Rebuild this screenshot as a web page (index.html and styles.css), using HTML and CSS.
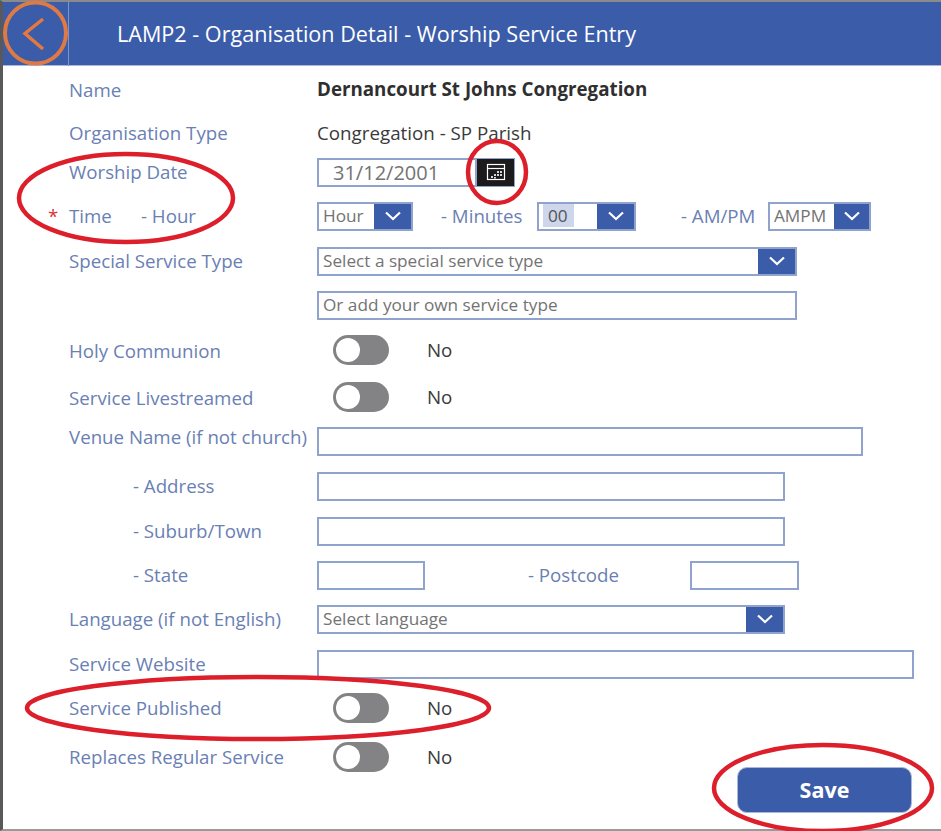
FILE: index.html
```html
<!DOCTYPE html>
<html>
<head>
	<title>Worship Service Entry</title>
	<link rel="stylesheet" href="styles.css">
</head>
<body>
<div class="app">
	<div class="top-bar">
		<div class="back">
			<svg width="65" height="64" viewBox="0 0 65 64"><circle cx="32.5" cy="31" r="30.5" /><polyline points="40,17 22,31.5 40,47" /></svg>
		</div>
		<h1>LAMP2 - Organisation Detail - Worship Service Entry</h1>
	</div>
	<div class="form">
		<div class="lbl">Name</div>
		<div class="field name-val">Dernancourt St Johns Congregation</div>

		<div class="lbl">Organisation Type</div>
		<div class="field type-val">Congregation - SP Parish</div>

		<div class="lbl">Worship Date</div>
		<div class="field">
			<div class="box date-box">31/12/2001</div>
			<div class="cal-btn">
				<svg width="20" height="18" viewBox="0 0 20 18">
					<rect x="1.5" y="1.5" width="17" height="15" class="cal-line" />
					<line x1="1.5" y1="5.5" x2="18.5" y2="5.5" class="cal-line" />
					<rect x="11" y="8" width="2" height="2" class="cal-dot" />
					<rect x="14" y="8" width="2" height="2" class="cal-dot" />
					<rect x="8" y="11" width="2" height="2" class="cal-dot" />
					<rect x="11" y="11" width="2" height="2" class="cal-dot" />
					<rect x="14" y="11" width="2" height="2" class="cal-dot" />
					<rect x="5" y="13" width="2" height="2" class="cal-dot" />
					<rect x="8" y="14" width="2" height="1.5" class="cal-dot" />
				</svg>
			</div>
		</div>

		<div class="lbl"><span class="star">*</span><span class="time-word">Time</span>- Hour</div>
		<div class="field">
			<div class="box select w-hour">
				<span class="sel-text">Hour</span>
				<span class="chev"><svg width="18" height="10" viewBox="0 0 18 10"><polyline points="2,1.5 9,8 16,1.5" /></svg></span>
			</div>
			<div class="lbl inline-min">- Minutes</div>
			<div class="box select w-min">
				<span class="sel-text"><span class="hl">00</span></span>
				<span class="chev"><svg width="18" height="10" viewBox="0 0 18 10"><polyline points="2,1.5 9,8 16,1.5" /></svg></span>
			</div>
			<div class="lbl inline-ampm">- AM/PM</div>
			<div class="box select w-ampm">
				<span class="sel-text">AMPM</span>
				<span class="chev"><svg width="18" height="10" viewBox="0 0 18 10"><polyline points="2,1.5 9,8 16,1.5" /></svg></span>
			</div>
		</div>

		<div class="lbl">Special Service Type</div>
		<div class="field">
			<div class="box select w-wide">
				<span class="sel-text">Select a special service type</span>
				<span class="chev"><svg width="18" height="10" viewBox="0 0 18 10"><polyline points="2,1.5 9,8 16,1.5" /></svg></span>
			</div>
		</div>

		<div class="lbl"></div>
		<div class="field">
			<div class="box w-wide"><span class="sel-text">Or add your own service type</span></div>
		</div>

		<div class="lbl lbl-down">Holy Communion</div>
		<div class="field"><span class="toggle"></span><span class="toggle-val">No</span></div>

		<div class="lbl lbl-down">Service Livestreamed</div>
		<div class="field"><span class="toggle"></span><span class="toggle-val">No</span></div>

		<div class="lbl lbl-up">Venue Name (if not church)</div>
		<div class="field"><div class="box w-venue"></div></div>

		<div class="lbl indent">- Address</div>
		<div class="field"><div class="box w-addr"></div></div>

		<div class="lbl indent">- Suburb/Town</div>
		<div class="field"><div class="box w-addr"></div></div>

		<div class="lbl indent">- State</div>
		<div class="field">
			<div class="box w-state"></div>
			<div class="lbl inline-post">- Postcode</div>
			<div class="box w-post"></div>
		</div>

		<div class="lbl">Language (if not English)</div>
		<div class="field">
			<div class="box select w-addr">
				<span class="sel-text">Select language</span>
				<span class="chev"><svg width="18" height="10" viewBox="0 0 18 10"><polyline points="2,1.5 9,8 16,1.5" /></svg></span>
			</div>
		</div>

		<div class="lbl">Service Website</div>
		<div class="field"><div class="box w-web"></div></div>

		<div class="lbl">Service Published</div>
		<div class="field"><span class="toggle"></span><span class="toggle-val">No</span></div>

		<div class="lbl">Replaces Regular Service</div>
		<div class="field"><span class="toggle"></span><span class="toggle-val">No</span></div>

		<button class="save">Save</button>
	</div>

	<!-- hand drawn red rings over the form -->
	<svg class="marks" width="941" height="831" viewBox="0 0 941 831">
		<ellipse cx="126" cy="198" rx="107" ry="44" />
		<ellipse cx="497" cy="172" rx="29" ry="31" />
		<ellipse cx="258" cy="708" rx="231" ry="31" />
		<ellipse cx="823" cy="788" rx="109" ry="43" />
	</svg>
</div>
</body>
</html>
```

FILE: styles.css
```css
*{
	margin: 0;
	padding: 0;
	box-sizing: border-box;
}
body{
	width: 941px;
	height: 831px;
	overflow: hidden;
	background: #fff;
	font-family: "Open Sans", "Liberation Sans", sans-serif;
}
.app{
	position: relative;
	width: 941px;
	height: 831px;
	border-left: 3px solid #595959;
	border-top: 2px solid #8a8a8a;
	border-bottom: 2px solid #9a9a9a;
}
.top-bar{
	height: 64px;
	display: flex;
	align-items: center;
	background: #3b5ca8;
	border-bottom: 1px solid #a9b7d8;
}
.back{
	width: 66px;
	height: 64px;
	border-right: 1px solid #7f95c8;
	flex-shrink: 0;
}
.back svg{
	display: block;
	overflow: visible;
}
.back circle{
	fill: none;
	stroke: #e07a45;
	stroke-width: 4;
}
.back polyline{
	fill: none;
	stroke: #e4783f;
	stroke-width: 3.5;
}
.top-bar h1{
	margin-left: 48px;
	font-size: 21.6px;
	font-weight: 400;
	color: #fff;
	white-space: nowrap;
}
.form{
	display: grid;
	grid-template-columns: 248px 1fr;
	grid-template-rows: 43px 39px 44px 45px 44px 45px 47px 44px 45px 45px 44px 44px 45px 44px 49px 25px 30px;
	padding: 9px 0 0 66px;
	align-items: start;
}
.lbl{
	height: 30px;
	line-height: 30px;
	font-size: 18.7px;
	color: #6a7fb4;
	white-space: nowrap;
}
.lbl-down{
	margin-top: 1px;
}
.lbl-up{
	margin-top: -4px;
}
.indent{
	padding-left: 64px;
}
.star{
	display: inline-block;
	width: 21px;
	margin-left: -21px;
	color: #d8343a;
}
.time-word{
	display: inline-block;
	width: 72px;
}
.field{
	height: 30px;
	display: flex;
	align-items: center;
	font-size: 18.75px;
	color: #3a3a3a;
	white-space: nowrap;
}
.name-val{
	padding-bottom: 4px;
	font-weight: 700;
	color: #2f2f2f;
}
.type-val{
	padding-bottom: 2px;
}
.box{
	height: 29px;
	border: 2px solid #8fa3cd;
	background: #fff;
	flex-shrink: 0;
}
.select{
	display: flex;
	justify-content: space-between;
}
.sel-text{
	display: block;
	padding-left: 4px;
	line-height: 23px;
	font-size: 17.2px;
	color: #737373;
}
.chev{
	width: 37px;
	height: 100%;
	display: flex;
	align-items: center;
	justify-content: center;
	background: #3b5ca8;
	flex-shrink: 0;
}
.chev polyline{
	fill: none;
	stroke: #fff;
	stroke-width: 2.2;
}
.hl{
	display: inline-block;
	width: 31px;
	padding-left: 5px;
	background: #cdd6ea;
	color: #555;
}
.date-box{
	width: 160px;
	padding-left: 14px;
	line-height: 25px;
	font-size: 20px;
	color: #737373;
}
.cal-btn{
	width: 39px;
	height: 29px;
	margin-left: -1px;
	display: flex;
	align-items: center;
	justify-content: center;
	background: #1b1a1c;
	border: 1px solid #8fa3cd;
}
.cal-line{
	fill: none;
	stroke: #fff;
	stroke-width: 1.2;
}
.cal-dot{
	fill: #d8d8d8;
}
.w-hour{
	width: 96px;
}
.inline-min{
	width: 96px;
	margin-left: 28px;
}
.w-min{
	width: 99px;
}
.inline-ampm{
	width: 87px;
	margin-left: 45px;
}
.w-ampm{
	width: 103px;
}
.w-ampm .chev{
	width: 35px;
}
.w-wide{
	width: 480px;
}
.w-venue{
	width: 546px;
}
.w-addr{
	width: 468px;
}
.w-state{
	width: 108px;
}
.inline-post{
	width: 162px;
	margin-left: 103px;
}
.w-post{
	width: 109px;
}
.w-web{
	width: 597px;
}
.toggle{
	position: relative;
	width: 56px;
	height: 30px;
	margin-left: 16px;
	border-radius: 15px;
	background: #838386;
}
.toggle::before{
	content: "";
	position: absolute;
	left: 3px;
	top: 3px;
	width: 24px;
	height: 24px;
	border-radius: 50%;
	background: #fff;
}
.toggle-val{
	margin-left: 38px;
	margin-bottom: 2px;
	font-size: 18.75px;
}
.save{
	grid-column: 1 / -1;
	justify-self: end;
	width: 175px;
	height: 46px;
	margin-right: 29px;
	padding-bottom: 2px;
	border: 1px solid #a9b7d8;
	border-radius: 10px;
	background: #3b5ca8;
	color: #fff;
	font-family: "Open Sans", "Liberation Sans", sans-serif;
	font-size: 21.5px;
	font-weight: 700;
}
.marks{
	position: absolute;
	left: -3px;
	top: -2px;
	pointer-events: none;
}
.marks ellipse{
	fill: none;
	stroke: #dc1f2b;
	stroke-width: 4.5;
}
```
